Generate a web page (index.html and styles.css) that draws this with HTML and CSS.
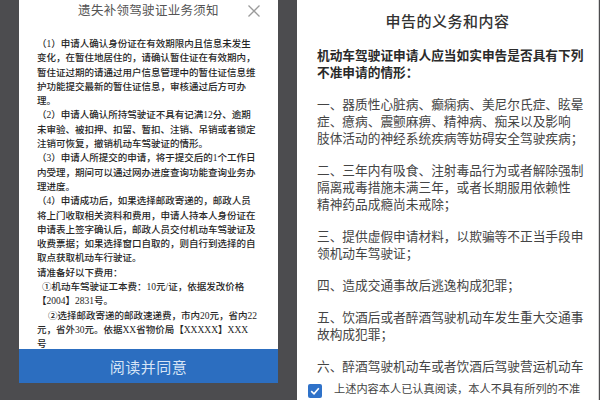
FILE: index.html
```html
<!DOCTYPE html>
<html lang="zh-CN">
<head>
<meta charset="utf-8">
<title>须知</title>
<link rel="stylesheet" href="styles.css">
</head>
<body>
<div class="page">
  <div class="left">
    <div class="modal">
      <div class="modal-head">
        <span class="modal-title">遗失补领驾驶证业务须知</span>
        <svg class="close" width="14" height="14" viewBox="0 0 14 14"><path d="M1.5 1.5 L12.5 12.5 M12.5 1.5 L1.5 12.5" stroke="#9a9a9a" stroke-width="1.3" fill="none"/></svg>
      </div>
      <div class="modal-body">
        <p>（1）申请人确认身份证在有效期限内且信息未发生<br>变化，在暂住地居住的，请确认暂住证在有效期内，<br>暂住证过期的请通过用户信息管理中的暂住证信息维<br>护功能提交最新的暂住证信息，审核通过后方可办<br>理。</p>
        <p>（2）申请人确认所持驾驶证不具有记满12分、逾期<br>未审验、被扣押、扣留、暂扣、注销、吊销或者锁定<br>注销可恢复，撤销机动车驾驶证的情形。</p>
        <p>（3）申请人所提交的申请，将于提交后的1个工作日<br>内受理，期间可以通过网办进度查询功能查询业务办<br>理进度。</p>
        <p>（4）申请成功后，如果选择邮政寄递的，邮政人员<br>将上门收取相关资料和费用，申请人持本人身份证在<br>申请表上签字确认后，邮政人员交付机动车驾驶证及<br>收费票据；如果选择窗口自取的，则自行到选择的自<br>取点获取机动车行驶证。</p>
        <p>请准备好以下费用：</p>
        <p><span class="ind1">①机动车驾驶证工本费：10元/证，依据发改价格</span><br>【2004】2831号。</p>
        <p><span class="ind2">②选择邮政寄递的邮政速递费，市内20元，省内22</span><br>元，省外30元。依据XX省物价局【XXXXX】XXX<br>号</p>
      </div>
    </div>
    <div class="agree-btn">阅读并同意</div>
  </div>
  <div class="right">
    <h1 class="r-title">申告的义务和内容</h1>
    <p class="intro">机动车驾驶证申请人应当如实申告是否具有下列<br>不准申请的情形：</p>
    <p class="item">一、器质性心脏病、癫痫病、美尼尔氏症、眩晕<br>症、癔病、震颤麻痹、精神病、痴呆以及影响<br>肢体活动的神经系统疾病等妨碍安全驾驶疾病；</p>
    <p class="item">二、三年内有吸食、注射毒品行为或者解除强制<br>隔离戒毒措施未满三年，或者长期服用依赖性<br>精神药品成瘾尚未戒除；</p>
    <p class="item">三、提供虚假申请材料，以欺骗等不正当手段申<br>领机动车驾驶证；</p>
    <p class="item">四、造成交通事故后逃逸构成犯罪；</p>
    <p class="item">五、饮酒后或者醉酒驾驶机动车发生重大交通事<br>故构成犯罪；</p>
    <p class="item">六、醉酒驾驶机动车或者饮酒后驾驶营运机动车</p>
    <div class="confirm">
      <svg class="check" width="14" height="14" viewBox="0 0 14 14"><rect x="0" y="0" width="14" height="14" rx="2" fill="#2f72c9"/><path d="M3.2 7.2 L6 9.8 L10.8 4.3" stroke="#fff" stroke-width="1.6" fill="none"/></svg>
      <span class="confirm-text">上述内容本人已认真阅读，本人不具有所列的不准</span>
    </div>
  </div>
</div>
</body>
</html>
```

FILE: styles.css
```css
html, body {
  margin: 0;
  padding: 0;
}
body {
  width: 600px;
  height: 400px;
  overflow: hidden;
  background: #4c4c4f;
  font-family: "Noto Sans CJK SC", sans-serif;
}
.page {
  display: flex;
  height: 400px;
}
.left {
  width: 259px;
  margin-left: 19px;
  display: flex;
  flex-direction: column;
}
.modal {
  height: 349px;
  background: #fff;
  overflow: hidden;
  display: flex;
  flex-direction: column;
}
.modal-head {
  height: 22px;
  display: flex;
  align-items: center;
  justify-content: center;
  position: relative;
}
.modal-title {
  font-size: 12.5px;
  color: #555;
  letter-spacing: 0.3px;
}
.close {
  position: absolute;
  right: 17px;
  top: 4px;
}
.modal-body {
  padding: 18px 0 0 18px;
  font-family: "Liberation Serif", "Noto Sans CJK SC", serif;
  font-size: 9.5px;
  line-height: 14.3px;
  color: #262626;
  font-weight: 500;
  white-space: nowrap;
}
.modal-body p {
  margin: 0;
}
.ind1 {
  padding-left: 5px;
}
.ind2 {
  padding-left: 11px;
}
.agree-btn {
  height: 34px;
  background: #2c6ec0;
  color: #d6e4f6;
  font-size: 15px;
  display: flex;
  align-items: center;
  justify-content: center;
  letter-spacing: 0.5px;
}
.right {
  margin-left: 19px;
  width: 302px;
  background: #fff;
  border-right: 1px solid #d8d8d8;
  box-sizing: border-box;
  padding: 11px 0 0 20px;
  overflow: hidden;
  white-space: nowrap;
}
.r-title {
  margin: 0 0 15px -20px;
  text-align: center;
  font-size: 15px;
  line-height: 20px;
  font-weight: 500;
  color: #333;
  letter-spacing: 0.5px;
}
.intro {
  margin: 0;
  font-size: 12.7px;
  line-height: 17px;
  font-weight: 700;
  color: #2a2a2a;
}
.item {
  margin: 15px 0 0 0;
  font-size: 12.7px;
  line-height: 17px;
  color: #444;
}
.confirm {
  display: flex;
  align-items: flex-start;
  margin: 7px 0 0 -9px;
}
.check {
  flex: none;
  margin-top: 3px;
}
.confirm-text {
  margin-left: 12px;
  font-size: 11.2px;
  line-height: 14px;
  color: #444;
}
```
